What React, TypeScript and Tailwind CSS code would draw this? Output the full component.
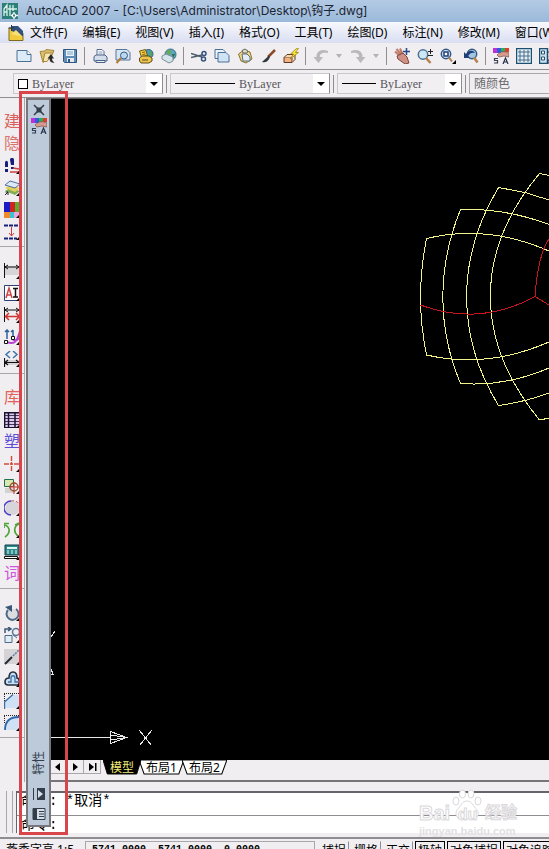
import type { ReactNode } from "react";

const menus = [
  "文件(F)",
  "编辑(E)",
  "视图(V)",
  "插入(I)",
  "格式(O)",
  "工具(T)",
  "绘图(D)",
  "标注(N)",
  "修改(M)",
  "窗口(W)",
];

type Tool = { label: string; icon: ReactNode };

const printer = (
  <>
    <path d="M5 7V1.5h5l2 2V7" fill="#fff" stroke="#536c94" />
    <path d="M2 8.5 4 7h9l2 2v4H2z" fill="#d3dcea" stroke="#4b6288" />
    <path d="M4 12.5h9v2H4z" fill="#eef2f8" stroke="#4b6288" />
    <path d="M6.5 4h4M6.5 6h4" stroke="#8193b0" />
  </>
);

const fileTools: Tool[] = [
  {
    label: "新建",
    icon: (
      <>
        <path d="M1 2.5h10l4 4v7H1z" fill="#dcebf8" stroke="#4d7195" />
        <path d="M11 2.5v4h4" fill="#fff" stroke="#4d7195" />
      </>
    ),
  },
  {
    label: "打开",
    icon: (
      <>
        <path d="M1 3.5 6 3l1-1.5 8 1L12 9l-8 5.500z" fill="#d9bd72" stroke="#a58737" />
        <path d="M6 5h8l-6 8.500H4z" fill="#f6e6ae" stroke="#a58737" />
        <path d="M15.500 14.500c-4 1-5-2-5-4H8.500L12 6l3 4.500h-2c0 2 1 3 2.500 4z" fill="#2a2a2a" />
      </>
    ),
  },
  {
    label: "保存",
    icon: (
      <>
        <path d="M1.5 1.500h13v13h-12l-1-1z" fill="#5f8db8" stroke="#2f5680" />
        <path d="M4 2h8v6H4z" fill="#e8f2fa" />
        <path d="M5 4h6M5 6h6" stroke="#7ea3c4" />
        <path d="M5 10h7v4H5z" fill="#e3e9ef" />
        <path d="M6 11h2v3H6z" fill="#2f5680" />
      </>
    ),
  },
];

const plotTools: Tool[] = [
  { label: "打印", icon: printer },
  {
    label: "打印预览",
    icon: (
      <>
        <path d="M1 1.500h11l3 3V12H1z" fill="#d6e4f3" stroke="#54779c" />
        <circle cx="9" cy="7.500" r="3.500" fill="#b7d8ee" stroke="#385a80" />
        <path d="M6 10 1.500 15" stroke="#b07a30" strokeWidth="2" />
      </>
    ),
  },
  {
    label: "发布",
    icon: (
      <>
        <circle cx="10.500" cy="6" r="4.500" fill="#4a9cbd" stroke="#276182" />
        <path d="M12 2.500c2 1 3 3 2 6l-2-1z" fill="#5aa44a" />
        <path d="m1.500 3 6-1.500 2 6-6 1.500z" fill="#f7d23c" stroke="#6b5a14" />
        <path d="m4 4.500 3-.500M4.500 6.500l3-.500" stroke="#8a5f16" />
        <path d="M1.500 10 4 8h7l3 2v3l-3 2H3l-1.500-2z" fill="#efc54d" stroke="#5a4a1c" />
        <path d="M4 12h6" stroke="#5a4a1c" />
      </>
    ),
  },
  {
    label: "三维 DWF",
    icon: (
      <>
        <circle cx="9.500" cy="6.500" r="5.500" fill="#5aa7c4" stroke="#356b86" />
        <path d="M7 2c3-1 4 1 3 3s-3 2-4 4c-1-2-1-5 1-7z" fill="#67aa57" />
        <path d="m1 8 4-2 7 3v4l-4 2-7-4z" fill="#d7e3ea" stroke="#76909c" />
        <path d="M11 6h3l-2 4z" fill="#2e6d42" />
      </>
    ),
  },
];

const editTools: Tool[] = [
  {
    label: "剪切",
    icon: (
      <>
        <path d="M0 5.500 11 9M0 9.500 11 7" stroke="#4e5d6e" strokeWidth="1.500" />
        <circle cx="13" cy="5.500" r="2" stroke="#31527c" strokeWidth="1.500" />
        <circle cx="12.500" cy="11" r="2" stroke="#31527c" strokeWidth="1.500" />
      </>
    ),
  },
  {
    label: "复制",
    icon: (
      <>
        <path d="M1 1.500h8l2 2v7H1z" fill="#eaf3fb" stroke="#4d7195" />
        <path d="M4 4.500h8l3 3v6.500H4z" fill="#cfe3f5" stroke="#4d7195" />
      </>
    ),
  },
  {
    label: "粘贴",
    icon: (
      <>
        <path d="M1.500 6 7 2l6 2 2 7-6 4-5-2z" fill="#ecd585" stroke="#8c7430" />
        <path d="M5 2.500 8 1l3 2-1 2H6z" fill="#d8d8d0" stroke="#6d6a58" />
        <path d="M5 6h5l3 3v4H6z" fill="#e5edf4" stroke="#5b6f84" />
      </>
    ),
  },
  {
    label: "特性匹配",
    icon: (
      <>
        <path d="M15 2 8 9" stroke="#8c4a2c" strokeWidth="2.500" />
        <path d="M9 7.500 2 14c3 1 6 0 8-5z" fill="#33393f" />
      </>
    ),
  },
  {
    label: "块编辑器",
    icon: (
      <>
        <path d="M1 9.500h8v5H1z" fill="#f5b183" stroke="#5b3a20" />
        <path d="m1 9.500 3-3h8l-3 3M12 6.500v5l-3 3" fill="#fbd3b0" stroke="#5b3a20" />
        <path d="M14 0 7.500 6h3L7 11l8.500-6.500h-3l3-4z" fill="#ffe23a" stroke="#8c7a10" strokeWidth=".7" />
      </>
    ),
  },
];

const undoIcon = (
  <path d="M15 3C8 0 3 4 3.500 9H.500l5 6 4.500-6H7c-.500-3 2-5 8-4z" fill="#b9b9bd" />
);
const redoIcon = (
  <path d="M1 3c7-3 12 1 11.500 6h3l-5 6L6 9h3c.500-3-2-5-8-4z" fill="#b9b9bd" />
);

const viewTools: Tool[] = [
  {
    label: "实时平移",
    icon: (
      <>
        <path d="M1 3.500 6 8M2.500 1l5 6M6 .500 9 7" stroke="#c07a6a" strokeWidth="2" />
        <path d="M3 8l6-3 4 4 2 6-4 1-7-5z" fill="#cf9185" stroke="#7e453b" />
        <path d="M12.500 0v7M9 3.500h7" stroke="#234a86" strokeWidth="1.500" />
      </>
    ),
  },
  {
    label: "实时缩放",
    icon: (
      <>
        <circle cx="6" cy="6.500" r="4.700" fill="#cfe6f5" stroke="#4a7094" strokeWidth="1.500" />
        <path d="m9 10 4.500 5" stroke="#b5804a" strokeWidth="2.500" />
        <path d="M13.500 1v5M11 3.500h5M11 7.500h5" stroke="#222" />
      </>
    ),
  },
  {
    label: "窗口缩放",
    icon: (
      <>
        <circle cx="6" cy="6" r="4.700" fill="#cfe6f5" stroke="#355b86" strokeWidth="1.500" />
        <path d="M4 4h4v4H4z" fill="#fff" stroke="#213f77" strokeWidth="1.500" />
        <path d="m9 9.500 3 4" stroke="#b5804a" strokeWidth="2" />
        <path d="M16 12v4h-4z" fill="#000" />
      </>
    ),
  },
  {
    label: "缩放上一个",
    icon: (
      <>
        <circle cx="9" cy="6" r="4.700" fill="#9fc6e2" stroke="#355b86" strokeWidth="1.500" />
        <path d="m11 9.500 3.500 5" stroke="#b5804a" strokeWidth="2.500" />
        <path d="M1 10V4l2 2c3-4 7-4 9-1-3-1-5 0-7 3l2 2z" fill="#213f77" />
      </>
    ),
  },
];

const swatches = (
  <>
    <path d="M0 0h4v5H0z" fill="#c02fd8" />
    <path d="M4 0h4v5H4z" fill="#2f5be0" />
    <path d="M8 0h4v4H8z" fill="#27b05a" />
    <path d="M12 0h4v4h-4z" fill="#e33b2e" />
    <path d="M4 7c4-4 7-4 12-2v4l-5-1-5 1z" fill="#d79a8e" stroke="#7d4c44" strokeWidth=".7" />
    <path d="M5 10.500H1.500v2h3V15H1" stroke="#333f55" strokeWidth="1.200" />
    <path d="m10 16 2.500-6 2.500 6M11 14h3" stroke="#25304a" strokeWidth="1.200" />
  </>
);

const paletteTools: Tool[] = [
  { label: "特性", icon: swatches },
  {
    label: "设计中心",
    icon: (
      <>
        <path d="M.500.500h15v15H.500z" fill="#e6f0f6" stroke="#1d4f72" strokeWidth="1.500" />
        <path
          d="M3 3h2v2H3zM7 3h2v2H7zM11 3h2v2h-2zM3 7h2v2H3zM7 7h2v2H7zM11 7h2v2h-2zM3 11h2v2H3zM7 11h2v2H7zM11 11h2v2h-2z"
          fill="#fff"
          stroke="#1d4f72"
          strokeWidth=".8"
        />
      </>
    ),
  },
  {
    label: "工具选项板",
    icon: (
      <>
        <path d="M.500.500h8v15h-8z" fill="#cfe0ec" stroke="#1d4f72" strokeWidth="1.500" />
        <path d="M2.500 3h3v3h-3zM2.500 9h3v3h-3z" fill="#fff" stroke="#1d4f72" />
        <path d="M8 4h4v6M10 8l2 3 2-3M9 12h6v3H9z" stroke="#22405a" />
      </>
    ),
  },
];

const corner = <path d="M16 12v4h-4z" fill="#000" />;

function Glyph({ text, color }: { text: string; color: string }) {
  return (
    <span className={`font-['Liberation_Serif','Noto_Sans_CJK_SC',serif] text-base leading-5 ${color}`}>
      {text}
    </span>
  );
}

const svg = (children: ReactNode) => (
  <svg viewBox="0 0 16 16" className="size-4" fill="none">
    {children}
    {corner}
  </svg>
);

const sideGroups: Tool[][] = [
  [
    { label: "建筑", icon: <Glyph text="建" color="text-[#d8625c]" /> },
    { label: "隐藏", icon: <Glyph text="隐" color="text-[#d8746c]" /> },
    {
      label: "步骤",
      icon: svg(
        <>
          <path d="M1 5c0-3 3-3 3 0v4H1zM1 11h3v3H1z" fill="#16207a" />
          <path d="M6 2c0-3 4-3 4 0v5H7zM7 9h3v2H7z" fill="#16207a" />
          <path d="M6 14h9M9 10l6 1" stroke="#cc4444" strokeWidth="1.500" />
        </>,
      ),
    },
    {
      label: "图层",
      icon: svg(
        <>
          <path d="m1 11 5-3 10 3-5 4z" fill="#7fae55" />
          <path d="m1 8 5-3 10 3-5 4z" fill="#e5cf5b" />
          <path d="m1 5 5-4 10 3-5 4z" fill="#dfe9f5" stroke="#4b6fa5" />
          <path d="m1 15 3-3M1.500 12H4v3" stroke="#222" />
        </>,
      ),
    },
    {
      label: "颜色",
      icon: svg(
        <>
          <path d="M0 0h6v10H0z" fill="#1c1cc4" />
          <path d="M6 0h5v10H6z" fill="#d22323" />
          <path d="M11 0h5v10h-5z" fill="#58ad2d" />
          <path d="M0 10h6v6H0z" fill="#ef8b2c" />
          <path d="M6 10h4v6H6z" fill="#37c3d6" />
          <path d="M10 10h6v6h-6z" fill="#e9a7dc" />
        </>,
      ),
    },
    {
      label: "间距",
      icon: svg(
        <>
          <path d="M0 1.500h16M0 14.500h13" stroke="#16207a" strokeWidth="2" strokeDasharray="4 1" />
          <path d="M7.500 3v9M5 9l2.500 3L10 9" stroke="#cc3b3b" />
        </>,
      ),
    },
  ],
  [
    {
      label: "线性标注",
      icon: svg(
        <>
          <path d="M1 3h15v9H1z" fill="#d6d4d6" />
          <path d="M.500 0v15M15.500 0v7M1 4h14M4 2 1 4l3 2M12 2l3 2-3 2" stroke="#111" />
        </>,
      ),
    },
    {
      label: "文字",
      icon: svg(
        <>
          <path d="M.500.500h15v15H.500z" fill="#fff" stroke="#2c3f77" />
          <path d="m2 13 3-10 3 10M3 10h4" stroke="#d04444" strokeWidth="1.500" />
          <path d="M9 3.500h5M11.500 4v8M9 12h5" stroke="#111" strokeWidth="1.500" />
        </>,
      ),
    },
    {
      label: "连续标注",
      icon: svg(
        <>
          <path d="M.500 0v15M1 3h14M4 1 1 3l3 2M12 1l3 2-3 2" stroke="#111" />
          <path d="M2 9.500h13M5 6 1.500 9.500 5 13M12 6l3.500 3.500L12 13" stroke="#d13232" strokeWidth="1.500" />
        </>,
      ),
    },
    {
      label: "样条",
      icon: svg(
        <>
          <path d="M3 10V1M1 3l2-2 2 2M9 7V1M7 3l2-2" stroke="#2e629c" strokeWidth="1.500" />
          <path d="M3 13c9 4 11-4 13-11M8 9c1 3 5 3 7 0" stroke="#b63fd0" strokeWidth="2" />
          <path d="M.500 11.500h3v3h-3zM7.500 7.500h3v3h-3z" fill="#fff" stroke="#111" />
        </>,
      ),
    },
    {
      label: "标注更新",
      icon: svg(
        <>
          <path d="M1 9h15v5H1z" fill="#d6d4d6" />
          <path d="M6 0 2 3.500 6 7M9 0l4 3.500L9 7" stroke="#3c76ad" strokeWidth="1.500" />
          <path d="M.500 7v9M1 11.500h14M4 9l-3 2.500L4 14M12 9l3 2.500" stroke="#111" strokeWidth="1.200" />
        </>,
      ),
    },
  ],
  [
    { label: "图库", icon: <Glyph text="库" color="text-[#e0625c]" /> },
    {
      label: "表格",
      icon: svg(
        <>
          <path d="M.700.700h15v15h-15z" fill="#dccbee" stroke="#1a1230" strokeWidth="1.400" />
          <path d="M4.500 1v14M11 1v14" stroke="#1a1230" strokeWidth="1.500" />
          <path d="M1 3.500h14M1 6.500h14M1 9.500h14M1 12.500h14" stroke="#1a1230" strokeWidth=".8" />
        </>,
      ),
    },
    { label: "塑料", icon: <Glyph text="塑" color="text-[#5c4fd6]" /> },
    {
      label: "中心线",
      icon: svg(
        <path d="M7.500 0v16M0 8h16" stroke="#d24a3a" strokeWidth="1.400" strokeDasharray="5 1 3 1" />,
      ),
    },
    {
      label: "区域",
      icon: svg(
        <>
          <path d="M1 10h10v5H1z" fill="#d3d3d3" />
          <path d="M.500 1.500h9v7h-9z" fill="#d9e8b0" stroke="#23704e" />
          <circle cx="10" cy="9" r="4" stroke="#93572c" strokeWidth="1.500" />
          <path d="M10 4v12M5 9h11" stroke="#cc3333" />
        </>,
      ),
    },
    {
      label: "圆",
      icon: svg(
        <>
          <circle cx="8.500" cy="8" r="7" fill="#d7d4da" />
          <path d="M7 1a7 7 0 0 0 0 14" stroke="#4a3fc8" strokeWidth="1.500" />
          <path d="M7 1c4-1 7 1 9 4" stroke="#c45252" strokeDasharray="3 2" />
        </>,
      ),
    },
    {
      label: "旋转",
      icon: svg(
        <path
          d="M1 3c5 2 6 8 0 12M0 6V1.500h5M15 2c-5 2-6 8-1 12M11 3l4-2"
          stroke="#4ea63c"
          strokeWidth="1.700"
        />,
      ),
    },
    {
      label: "计算器",
      icon: svg(
        <>
          <path d="M1 1h14v10H1z" fill="#2d8d8d" stroke="#0e3c48" />
          <path d="M3 3h10v2H3z" fill="#e1f3f3" />
          <path d="M3 7h2M7 7h2M11 7h2M3 9h2M7 9h2M11 9h2" stroke="#e1f3f3" />
          <path d="M.500 12.500h13v2H.500z" fill="#fff" stroke="#111" />
        </>,
      ),
    },
    { label: "词库", icon: <Glyph text="词" color="text-[#cf52dc]" /> },
  ],
  [
    {
      label: "旋转视图",
      icon: svg(
        <>
          <circle cx="8.500" cy="9" r="5" fill="#dcdde0" />
          <path d="M4 5a6 6 0 1 0 8-1" stroke="#4c6a89" strokeWidth="2" />
          <path d="M1 2 8 0v7z" fill="#3c5876" />
        </>,
      ),
    },
    {
      label: "缩放",
      icon: svg(
        <>
          <path d="M1 8.500h7v7H1z" fill="#e2ecf5" stroke="#4c6a89" />
          <path d="M1 6V2h5M4 0l3 2-3 2" stroke="#3c5876" strokeWidth="1.500" />
          <circle cx="12" cy="5" r="3.500" stroke="#54779c" strokeWidth="1.500" />
          <path d="m9 8 4 3" stroke="#54779c" />
        </>,
      ),
    },
    {
      label: "打断",
      icon: svg(
        <>
          <path d="M0 0h16v15H0z" fill="#d5d3d5" />
          <path d="m1 15 7-7" stroke="#222a36" strokeWidth="2" />
          <path d="m9 7 6-6" stroke="#5b7ba3" strokeDasharray="2 1" strokeWidth="1.500" />
        </>,
      ),
    },
    {
      label: "偏移",
      icon: svg(
        <>
          <path
            d="M1 11c0-3 2-4 4-4 0-8 8-8 8 0 3 0 3 7 0 7H4c-2 0-3-1-3-3z"
            fill="#c9dff3"
            stroke="#232f3f"
            strokeWidth="1.600"
          />
          <path d="M4 11h3V7c0-3 4-3 4 0v4h3" stroke="#3f74ad" strokeWidth="1.300" />
        </>,
      ),
    },
    {
      label: "倒角",
      icon: svg(
        <>
          <path d="M1 9 9 2h7v13H1z" fill="#cfe2f5" />
          <path d="M0 .500h16M.500 1v8" stroke="#222" strokeDasharray="1 1" />
          <path d="M.500 16V9L9 1.500" stroke="#3c6ea8" strokeWidth="1.400" />
        </>,
      ),
    },
    {
      label: "圆角",
      icon: svg(
        <>
          <path d="M1 14C1 6 5 2 15 2v13H1z" fill="#cfe2f5" />
          <path d="M0 .500h16M.500 1v8" stroke="#222" strokeDasharray="1 1" />
          <path d="M1 15C1 7 5 2 15 2" stroke="#2f66ac" strokeWidth="1.800" />
        </>,
      ),
    },
  ],
];

const toggles = [
  { label: "捕捉", on: false },
  { label: "栅格", on: false },
  { label: "正交", on: false },
  { label: "极轴", on: true },
  { label: "对象捕捉", on: true },
  { label: "对象追踪", on: true },
];

function ToolButton({ label, icon }: Tool) {
  return (
    <button aria-label={label} className="flex h-5 w-[23px] shrink-0 items-center justify-center">
      <svg viewBox="0 0 16 16" className="size-4" fill="none">
        {icon}
      </svg>
    </button>
  );
}

function Tools({ items }: { items: Tool[] }) {
  return items.map((t) => <ToolButton key={t.label} {...t} />);
}

function Divider() {
  return <div className="mx-[3px] h-[18px] w-px shrink-0 bg-[#8f8d92]" />;
}

function Caret({ label }: { label: string }) {
  return (
    <button aria-label={label} className="flex h-5 w-[14px] shrink-0 items-center justify-center">
      <svg viewBox="0 0 6 4" className="h-1 w-1.5">
        <path d="M0 0h6L3 4z" fill="#b4b2b6" />
      </svg>
    </button>
  );
}

function LayerSelect({ label, width, preview }: { label: string; width: string; preview: ReactNode }) {
  return (
    <label
      className={`flex h-[21px] shrink-0 items-center border border-[#c9c7cc] border-r-[#8f8d92] bg-[#f1eff2] pl-1 ${width}`}
    >
      {preview}
      <select
        aria-label={label}
        className="h-4 min-w-0 flex-1 appearance-none bg-transparent font-['Liberation_Serif',serif] text-xs leading-4 text-[#55555a] outline-none"
      >
        <option>ByLayer</option>
      </select>
      <span className="flex h-full w-[16px] items-center justify-center bg-white">
        <svg viewBox="0 0 8 4" className="h-1 w-2">
          <path d="M0 0h8L4 4z" />
        </svg>
      </span>
    </label>
  );
}

function LayoutTab({ label, active }: { label: string; active?: boolean }) {
  return (
    <button
      className={`relative -ml-0.5 h-[15px] px-[7px] text-xs leading-[14px] ${active ? "z-10 text-[#f2ee7c]" : "text-black"}`}
    >
      <svg viewBox="0 0 44 15" preserveAspectRatio="none" className="absolute inset-0 size-full">
        <path d="M0 0 5 14h34l5-14z" fill={active ? "#000" : "#fff"} stroke="#000" />
      </svg>
      <span className="relative">{label}</span>
    </button>
  );
}

function Drawing() {
  return (
    <svg className="absolute inset-0 size-full" fill="none" shapeRendering="crispEdges">
      <g transform="translate(-50 -99)">
        <g stroke="#f4f48c">
          <path d="M426.500 238.500C418.500 280 418.500 315 426.500 355" />
          <path d="M460.500 209.500C438 265 436 325 460.500 383.500" />
          <path d="M498.500 187.500C456 258 456 336 498.500 405.500" />
          <path d="M539.500 173.500C474 252 474 340 539.500 420" />
          <path d="M426.500 238.500C470 228 510 234 549 251" />
          <path d="M460.500 209.500Q505 208 549 224.500" />
          <path d="M498.500 187.500 525 192.500 549 200" />
          <path d="m539.500 173.500 10 2" />
          <path d="M426.500 355C470 365 510 359 549 342" />
          <path d="M460.500 383.500Q505 387 549 368" />
          <path d="M498.500 405.500Q525 402 549 393" />
          <path d="m539.500 420 10-2" />
        </g>
        <g stroke="#c8141c">
          <path d="M420.500 305C460 320 500 316 535 296.500L549 305" />
          <path d="M535 296.500C536 275 541 250 549 239" />
        </g>
        {/* UCS icon */}
        <g stroke="#e8e8e8">
          <path d="M50 737.500h60M110.500 731.500v12l16-6zM110.500 735l16 2.500-16 2.500" />
          <path d="m139.500 730.500 12 15M151.500 730.500l-12 15" />
          <path d="m51 637 4-6M51 669l2 5h-2" />
        </g>
      </g>
    </svg>
  );
}

export default function App() {
  return (
    <div className="relative flex h-screen flex-col overflow-hidden bg-[#f0eef1] font-['Noto_Sans','Noto_Sans_CJK_SC',sans-serif] text-black">
      {/* Title bar */}
      <header className="flex h-[22px] shrink-0 items-center gap-2 bg-linear-to-b from-[#b3cae4] to-[#9bb9da] pl-0.5">
        <svg viewBox="0 0 16 16" className="size-4 shrink-0" fill="none">
          <path d="M0 0h16v16H0z" fill="#2d8077" />
          <path d="M2 13V6l3-4v11M2 9h3M8 2v11M11 2v6M6 6h9" stroke="#d9f1ea" strokeWidth="1.300" />
          <path d="M12 9v7M9 12.500h7" stroke="#fff" strokeWidth="1.300" />
          <path d="M10.500 11h3v3h-3z" fill="#2d8077" stroke="#fff" />
        </svg>
        <h1 className="whitespace-pre font-['Inter','Noto_Sans_CJK_SC',sans-serif] text-xs leading-5 text-[#1c2430]">
          {"AutoCAD 2007 - [C:\\Users\\Administrator\\Desktop\\钩子.dwg]"}
        </h1>
      </header>

      {/* Menu */}
      <nav className="flex h-[21px] shrink-0 items-center bg-linear-to-b from-[#f8f9fd] to-[#d9def1] pl-2">
        <svg viewBox="0 0 16 16" className="mr-1.5 size-4 shrink-0" fill="none">
          <path d="M1 3h9l5 5v7.500H1z" fill="#f0c93c" stroke="#806a1b" />
          <path d="M4 1h6l5 5v6L4 6z" fill="#33507c" />
          <path d="m3 9 5-4 7 7" fill="#f7df75" />
          <path d="M3.500 0v6M.500 3h6" stroke="#27364e" />
        </svg>
        <div className="flex gap-[15px]">
          {menus.map((m) => (
            <button key={m} className="h-5 whitespace-nowrap text-left text-xs leading-5">
              {m}
            </button>
          ))}
        </div>
      </nav>

      {/* Standard toolbar */}
      <div className="flex h-[27px] shrink-0 items-center border-b border-[#8f8d92] pl-3">
        <Tools items={fileTools} />
        <Divider />
        <Tools items={plotTools} />
        <Divider />
        <Tools items={editTools} />
        <Divider />
        <ToolButton label="放弃" icon={undoIcon} />
        <Caret label="放弃列表" />
        <ToolButton label="重做" icon={redoIcon} />
        <Caret label="重做列表" />
        <Divider />
        <Tools items={viewTools} />
        <Divider />
        <Tools items={paletteTools} />
      </div>

      {/* Object properties */}
      <div className="flex h-7 shrink-0 items-center border-b border-[#8f8d92] pl-[13px]">
        <LayerSelect
          label="颜色控制"
          width="w-[150px]"
          preview={<span className="mr-1 size-2.5 border border-black bg-white" />}
        />
        <Divider />
        <LayerSelect
          label="线型控制"
          width="w-[160px]"
          preview={<span className="mr-1 h-px w-[60px] bg-black" />}
        />
        <Divider />
        <LayerSelect
          label="线宽控制"
          width="w-[125px]"
          preview={<span className="mr-1 h-px w-[34px] bg-black" />}
        />
        <Divider />
        <select
          aria-label="打印样式控制"
          disabled
          className="h-[21px] min-w-0 flex-1 appearance-none border border-r-0 border-[#a9a7ab] bg-[#f0eef1] pl-1 text-xs leading-4 text-[#6a6a6e]"
        >
          <option>随颜色</option>
        </select>
      </div>

      {/* Workspace */}
      <main className="flex min-h-0 flex-1">
        <aside className="w-[25px] shrink-0 border-r border-[#a9a7ab]">
          {sideGroups.map((group) => (
            <div key={group[0].label} className="border-b border-[#a9a7ab] pb-[3px] pt-[13px]">
              {group.map((t) => (
                <button key={t.label} aria-label={t.label} className="flex h-[22px] w-full items-center pl-1">
                  {t.icon}
                </button>
              ))}
            </div>
          ))}
        </aside>
        <section className="flex min-w-0 flex-1 flex-col pl-[25px]">
          <div className="relative flex-1 border-t border-[#55555a] bg-black">
            <Drawing />
          </div>
          <div className="flex h-[22px] shrink-0 items-start border-b-2 border-[#77757a]">
            {["M6 0v8L1 4z", "M2 0v8l5-4z", "M1 0v8l5-4zM7 0h1.500v8H7z"].map((d, i) => (
              <button
                key={d}
                aria-label={["上一个布局", "下一个布局", "最后一个布局"][i]}
                className="flex h-[14px] w-[17px] items-center justify-center border-b border-r border-[#a9a7ab]"
              >
                <svg viewBox="0 0 9 8" className="h-2 w-[9px]">
                  <path d={d} />
                </svg>
              </button>
            ))}
            <div className="ml-1 flex">
              <LayoutTab label="模型" active />
              <LayoutTab label="布局1" />
              <LayoutTab label="布局2" />
            </div>
          </div>
        </section>
      </main>

      {/* Command line */}
      <section className="flex shrink-0 border-b-2 border-[#8f8d92] pb-1 pt-[9px] font-['Liberation_Mono','Noto_Sans_CJK_SC',monospace] text-sm leading-4">
        <div className="ml-1.5 mr-[3px] w-[7px] border-x border-[#a9a7ab]" />
        <div className="min-w-0 flex-1 border-l border-t-2 border-[#66646a] bg-white">
          <p className="flex h-[22px] items-start whitespace-pre pl-1">命令: *取消*</p>
          <label className="flex h-[18px] items-center border-t border-[#8f8d92] pl-1">
            命令:
            <input aria-label="命令" className="min-w-0 flex-1 bg-transparent outline-none" />
          </label>
        </div>
      </section>

      {/* Status bar */}
      <footer className="flex h-[10px] shrink-0 items-start overflow-hidden pt-0.5 text-xs leading-4">
        <span className="w-[85px] shrink-0 whitespace-nowrap pl-1.5 pt-px">燕秀字高 1:5</span>
        <span className="h-5 w-[230px] shrink-0 whitespace-pre border border-[#a9a7ab] pl-1.5 font-['Liberation_Mono',monospace] text-[10px] font-bold">
          5741.0000, 5741.0000, 0.0000
        </span>
        <div className="ml-1 flex gap-0.5">
          {toggles.map((t) => (
            <button
              key={t.label}
              aria-pressed={t.on}
              className={`h-5 whitespace-nowrap border px-0.5 ${t.on ? "border-black" : "border-transparent border-r-[#8f8d92]"}`}
            >
              {t.label}
            </button>
          ))}
        </div>
      </footer>

      {/* Docked properties palette */}
      <aside className="absolute bottom-[22px] left-[26px] top-[98px] flex w-[25px] flex-col items-center border-2 border-[#77777b] bg-[#bccada] pb-1 pt-1">
        <button aria-label="关闭">
          <svg viewBox="0 0 12 12" className="size-3" fill="none">
            <path d="m1 1 10 10M11 1 1 11" stroke="#333e4a" strokeWidth="1.500" />
            <path d="M3.500 3.500h5v5h-5z" fill="#333e4a" />
          </svg>
        </button>
        <svg viewBox="0 0 16 16" className="mt-0.5 size-4" fill="none">
          {swatches}
        </svg>
        <h2 className="mt-auto rotate-180 text-xs leading-4 text-[#333e4a] [text-orientation:sideways] [writing-mode:vertical-rl]">
          特性
        </h2>
        <button aria-label="自动隐藏" className="mt-3">
          <svg viewBox="0 0 14 14" className="size-3.5" fill="none">
            <path d="M1.500 1v12" stroke="#333e4a" />
            <path d="M5 1h8v12H5z" fill="#333e4a" />
            <path d="m6 3 5 4-5 4z" fill="#d5dfe9" />
          </svg>
        </button>
        <button aria-label="选项" className="mt-1.5">
          <svg viewBox="0 0 14 14" className="size-3.5" fill="none">
            <path d="M1 1.500h12v11H1z" fill="#d5dfe9" stroke="#333e4a" />
            <path d="M1 1h4v12H1z" fill="#333e4a" />
            <path d="M7 4.500h5M7 7h5M7 9.500h5" stroke="#333e4a" />
          </svg>
        </button>
      </aside>

      {/* Highlight frame */}
      <div className="pointer-events-none absolute bottom-3.5 left-[19px] top-[91px] w-[49px] border-[3px] border-[#d8454a]" />

      {/* Watermark */}
      <div className="pointer-events-none absolute bottom-3 right-8 w-[98px] font-['Liberation_Sans','Noto_Sans_CJK_SC',sans-serif] font-bold text-white">
        <svg viewBox="0 0 32 32" className="absolute -top-1 left-8 size-8" fill="#fff" stroke="#dad8db">
          <ellipse cx="5" cy="12" rx="3" ry="4" />
          <ellipse cx="11.500" cy="5" rx="3" ry="4" />
          <ellipse cx="20" cy="5" rx="3" ry="4" />
          <ellipse cx="27" cy="12" rx="3" ry="4" />
          <path d="M16 12c5 0 6 5 10 9 3 4 0 9-4 9H10c-5 0-6-6-4-9 4-4 5-9 10-9z" />
        </svg>
        <div className="relative flex items-end justify-between pt-2 text-xl leading-6 [-webkit-text-stroke:1px_#dad8db]">
          <span>Bai</span>
          <span className="text-base leading-5">du</span>
          <span className="text-base leading-6">经验</span>
        </div>
        <p className="text-[11px] leading-3 text-[#e2e0e3]">jingyan.baidu.com</p>
      </div>
    </div>
  );
}
